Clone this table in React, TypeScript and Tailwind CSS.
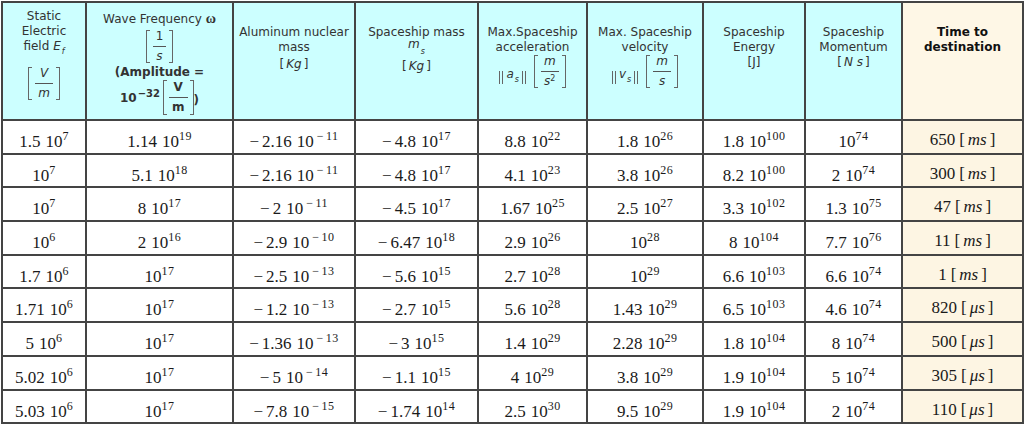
import React from "react"

type Val = [string, string]

const ROWS: { cells: Val[]; time: [string, string] }[] = [
  { cells: [["1.5", "7"], ["1.14", "19"], ["−2.16", "−11"], ["−4.8", "17"], ["8.8", "22"], ["1.8", "26"], ["1.8", "100"], ["", "74"]], time: ["650", "ms"] },
  { cells: [["", "7"], ["5.1", "18"], ["−2.16", "−11"], ["−4.8", "17"], ["4.1", "23"], ["3.8", "26"], ["8.2", "100"], ["2", "74"]], time: ["300", "ms"] },
  { cells: [["", "7"], ["8", "17"], ["−2", "−11"], ["−4.5", "17"], ["1.67", "25"], ["2.5", "27"], ["3.3", "102"], ["1.3", "75"]], time: ["47", "ms"] },
  { cells: [["", "6"], ["2", "16"], ["−2.9", "−10"], ["−6.47", "18"], ["2.9", "26"], ["", "28"], ["8", "104"], ["7.7", "76"]], time: ["11", "ms"] },
  { cells: [["1.7", "6"], ["", "17"], ["−2.5", "−13"], ["−5.6", "15"], ["2.7", "28"], ["", "29"], ["6.6", "103"], ["6.6", "74"]], time: ["1", "ms"] },
  { cells: [["1.71", "6"], ["", "17"], ["−1.2", "−13"], ["−2.7", "15"], ["5.6", "28"], ["1.43", "29"], ["6.5", "103"], ["4.6", "74"]], time: ["820", "μs"] },
  { cells: [["5", "6"], ["", "17"], ["−1.36", "−13"], ["−3", "15"], ["1.4", "29"], ["2.28", "29"], ["1.8", "104"], ["8", "74"]], time: ["500", "μs"] },
  { cells: [["5.02", "6"], ["", "17"], ["−5", "−14"], ["−1.1", "15"], ["4", "29"], ["3.8", "29"], ["1.9", "104"], ["5", "74"]], time: ["305", "μs"] },
  { cells: [["5.03", "6"], ["", "17"], ["−7.8", "−15"], ["−1.74", "14"], ["2.5", "30"], ["9.5", "29"], ["1.9", "104"], ["2", "74"]], time: ["110", "μs"] },
]

const COLS = ["w-[84px]", "w-[147px]", "w-[122px]", "w-[123px]", "w-[109px]", "w-[116px]", "w-[102px]", "w-[97px]", "w-[121px]"]

function Num({ v }: { v: Val }) {
  const [m, e] = v
  const neg = m.startsWith("−")
  const eneg = e.startsWith("−")
  return (
    <span>
      {neg && <span className="mr-[3px]">−</span>}
      {neg ? m.slice(1) : m}
      <span className={m ? "ml-[5px]" : ""}>10</span>
      <span className="align-[7px] text-[12px] leading-none tracking-[0.5px]">
        {eneg ? (
          <>
            <span className="ml-[3px] mr-[2px]">−</span>
            {e.slice(1)}
          </>
        ) : (
          e
        )}
      </span>
    </span>
  )
}

function Frac({ num, den, tight = false }: { num: React.ReactNode; den: React.ReactNode; tight?: boolean }) {
  return (
    <span className={`inline-flex items-stretch align-middle ${tight ? "h-[35px]" : "h-[33px]"}`}>
      <span className="w-[4px] border-y border-l border-[#666]" />
      <span className={`flex flex-col items-center justify-center leading-[13px] ${tight ? "px-[2px]" : "px-[3px]"}`}>
        <span className="px-[3px]">{num}</span>
        <span className="my-[3px] h-px w-full bg-[#555]" />
        <span className="px-[3px]">{den}</span>
      </span>
      <span className="w-[4px] border-y border-r border-[#666]" />
    </span>
  )
}

function Norm({ v }: { v: string }) {
  return (
    <span className="mb-[1px] mr-[8px] inline-flex items-center">
      <span className="h-[13px] w-[4px] border-x border-[#666]" />
      <span className="px-[3px] italic">
        {v}
        <span className="ml-[1px] align-[-4px] text-[8px]">s</span>
      </span>
      <span className="h-[13px] w-[4px] border-x border-[#666]" />
    </span>
  )
}

const TH_BASE =
  "border-2 border-[#444] px-[2px] align-top text-center font-['DejaVu_Sans','Verdana',sans-serif] text-[12px] leading-[15px]"
const TH = `${TH_BASE} bg-[#ccffff] font-normal text-[#333]`
const TD =
  "border-2 border-[#444] pt-[9px] align-top text-center whitespace-nowrap font-['Liberation_Serif','Times_New_Roman',serif] text-[17px] leading-[20px] text-[#1a1a1a]"

export default function App() {
  return (
    <div className="h-[426px] w-[1024px] overflow-hidden bg-white pl-[1px] pt-[1px]">
      <table className="w-[1021px] table-fixed border-collapse">
        <colgroup>
          {COLS.map((c, i) => (
            <col key={i} className={c} />
          ))}
        </colgroup>
        <thead>
          <tr className="h-[118px]">
            <th className={`${TH} pt-[6px]`}>
              <div>Static</div>
              <div>Electric</div>
              <div>
                field <i>E</i>
                <span className="ml-[1px] align-[-4px] text-[8px] italic">f</span>
              </div>
              <div className="mt-[8px]">
                <Frac num={<i>V</i>} den={<i>m</i>} />
              </div>
            </th>
            <th className={`${TH} pt-[8px]`}>
              <div>
                Wave Frequency{" "}
                <span className="font-['Liberation_Serif',serif] text-[14px] font-bold">ω</span>
              </div>
              <div className="mt-[3px]">
                <Frac num="1" den={<i>s</i>} />
              </div>
              <div className="mt-[2px] font-bold">(Amplitude =</div>
              <div className="flex items-center justify-center font-bold">
                <span>
                  10<span className="ml-[1px] align-[5px] text-[10px] leading-none">−32</span>
                </span>
                <span className="ml-[3px]">
                  <Frac num="V" den="m" tight />
                </span>
                <span className="mt-[6px]">)</span>
              </div>
            </th>
            <th className={`${TH} pt-[22px]`}>
              <div>Aluminum nuclear</div>
              <div>mass</div>
              <div className="mt-[2px]">
                [<i className="mx-[2px]">Kg</i>]
              </div>
            </th>
            <th className={`${TH} pt-[22px]`}>
              <div>Spaceship mass</div>
              <div className="-mt-[3px]">
                <i>m</i>
                <span className="ml-[1px] align-[-6px] text-[8px] italic leading-none">s</span>
              </div>
              <div className="mt-[3px]">
                [<i className="mx-[2px]">Kg</i>]
              </div>
            </th>
            <th className={`${TH} pt-[22px]`}>
              <div>Max.Spaceship</div>
              <div>acceleration</div>
              <div className="flex items-end justify-center">
                <Norm v="a" />
                <Frac
                  num={<i>m</i>}
                  den={
                    <i>
                      s<span className="align-[4px] text-[8px] not-italic leading-none">2</span>
                    </i>
                  }
                />
              </div>
            </th>
            <th className={`${TH} pt-[22px]`}>
              <div>Max. Spaceship</div>
              <div>velocity</div>
              <div className="flex items-end justify-center">
                <Norm v="v" />
                <Frac num={<i>m</i>} den={<i>s</i>} />
              </div>
            </th>
            <th className={`${TH} pt-[22px]`}>
              <div>Spaceship</div>
              <div>Energy</div>
              <div>[J]</div>
            </th>
            <th className={`${TH} pt-[22px]`}>
              <div>Spaceship</div>
              <div>Momentum</div>
              <div>
                [<i className="mx-[2px]">N s</i>]
              </div>
            </th>
            <th className={`${TH_BASE} bg-[#fef7e6] pt-[22px] font-bold text-[#111]`}>
              <div>Time to</div>
              <div>destination</div>
            </th>
          </tr>
        </thead>
        <tbody>
          {ROWS.map((r, i) => (
            <tr key={i} className="h-[33.7px]">
              {r.cells.map((v, j) => (
                <td key={j} className={TD}>
                  <Num v={v} />
                </td>
              ))}
              <td className={`${TD} bg-[#fdf5e3]`}>
                {r.time[0]}
                <span className="ml-[4px]">[</span>
                <i className="mx-[3px]">{r.time[1]}</i>]
              </td>
            </tr>
          ))}
        </tbody>
      </table>
    </div>
  )
}
